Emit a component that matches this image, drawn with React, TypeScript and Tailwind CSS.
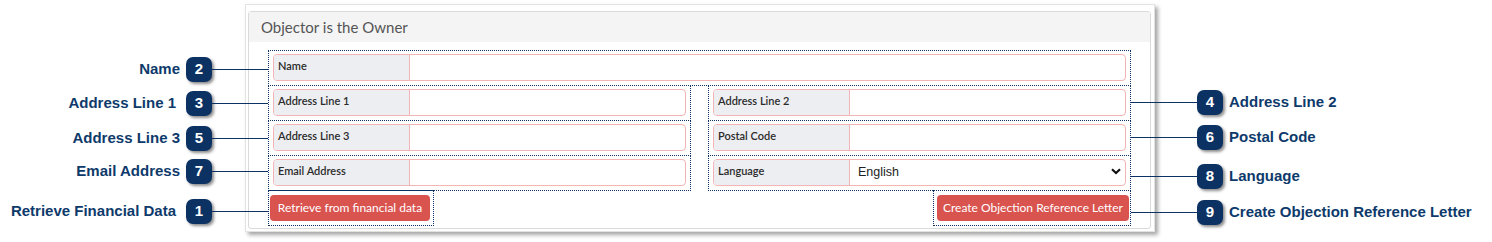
import React from 'react';

// Callout rows beside the form, each with its own offset from the row above
const leftCallouts = [
  { n: 2, label: 'Name', mt: 'mt-[56px]', pr: '' },
  { n: 3, label: 'Address Line 1', mt: 'mt-[8px]', pr: 'pr-[4px]' },
  { n: 5, label: 'Address Line 3', mt: 'mt-[9px]', pr: '' },
  { n: 7, label: 'Email Address', mt: 'mt-[7px]', pr: '' },
  { n: 1, label: 'Retrieve Financial Data', mt: 'mt-[14px]', pr: 'pr-[4px]' },
];

const rightCallouts = [
  { n: 4, label: 'Address Line 2', mt: 'mt-[89px]' },
  { n: 6, label: 'Postal Code', mt: 'mt-[9px]' },
  { n: 8, label: 'Language', mt: 'mt-[13px]' },
  { n: 9, label: 'Create Objection Reference Letter', mt: 'mt-[10px]' },
];

const Badge: React.FC<{ n: number }> = ({ n }) => (
  <div className="w-[26px] h-[25px] shrink-0 rounded-[7px] bg-[#0c3263] shadow-[2px_2px_3px_rgba(0,0,0,0.45)] flex items-center justify-center text-white text-[15px] font-bold">
    {n}
  </div>
);

const InputGroup: React.FC<{ label: string; children?: React.ReactNode }> = ({ label, children }) => (
  <div className="flex h-[27px] border border-[#f2b4b4] rounded-[4px] overflow-hidden bg-white">
    <div className="w-[136px] shrink-0 bg-[#edeef2] border-r border-[#f2b4b4] pl-[4px] pb-[2px] flex items-center text-[11px] font-semibold text-[#2b2b2b]">
      {label}
    </div>
    <div className="flex-1 flex items-center">{children}</div>
  </div>
);

const Cell: React.FC<{ label: string; first?: boolean; children?: React.ReactNode }> = ({ label, first, children }) => (
  <div className={`border border-dotted border-[#0c3263] pt-[3px] pb-[4px] px-[4px] ${first ? '' : '-mt-px'}`}>
    <InputGroup label={label}>{children}</InputGroup>
  </div>
);

export default function App() {
  return (
    <div className="w-[1492px] h-[242px] bg-white flex overflow-hidden" style={{ fontFamily: 'Lato, "Open Sans", sans-serif' }}>
      {/* left callouts */}
      <div className="w-[245px] shrink-0 flex flex-col" style={{ fontFamily: '"Liberation Sans", Arial, sans-serif' }}>
        {leftCallouts.map(c => (
          <div key={c.n} className={`flex items-center h-[26px] ${c.mt}`}>
            <div className={`flex-1 text-right text-[15px] font-bold text-[#0e3a6b] whitespace-nowrap ${c.pr}`}>{c.label}</div>
            <div className="ml-[6px]"><Badge n={c.n} /></div>
            <div className="w-[56px] h-px bg-[#0c3263] shrink-0 -mr-[23px] relative z-10" />
          </div>
        ))}
      </div>

      {/* form panel */}
      <div className="w-[910px] h-[228px] mt-[4px] shrink-0 bg-white border border-[#e2e2e2] shadow-[3px_3px_4px_rgba(0,0,0,0.35)] pt-[6px] pl-[2px] pr-[3px] pb-[2px]">
        <div className="h-full border border-[#dadada] rounded-[3px] flex flex-col">
          <div className="h-[30px] bg-[#f4f4f4] px-[12px] flex items-center text-[15px] text-[#555]">
            Objector is the Owner
          </div>
          <div className="pt-[8px] px-[19px]">
            <Cell label="Name" first />
            <div className="grid grid-cols-2 gap-x-[17px]">
              <div className="flex flex-col">
                <Cell label="Address Line 1" />
                <Cell label="Address Line 3" />
                <Cell label="Email Address" />
              </div>
              <div className="flex flex-col">
                <Cell label="Address Line 2" />
                <Cell label="Postal Code" />
                <Cell label="Language">
                  <select
                    defaultValue="English"
                    className="flex-1 h-full appearance-none bg-transparent outline-none pl-[8px] text-[12.5px] text-[#222]"
                    style={{ fontFamily: '"Liberation Sans", Arial, sans-serif' }}
                  >
                    <option>English</option>
                  </select>
                  <svg width="10" height="7" viewBox="0 0 10 7" className="mr-[4px] mb-[2px] shrink-0">
                    <path d="M1 1.2 L5 5 L9 1.2" fill="none" stroke="#111" strokeWidth="2.2" />
                  </svg>
                </Cell>
              </div>
            </div>
            <div className="flex justify-between">
              <div className="-mt-px border border-dotted border-[#0c3263] pt-[3px] pb-[4px] pl-[1px] pr-[3px]">
                <button className="w-[160px] h-[26px] rounded-[4px] bg-[#d9534f] text-white text-[12px]">
                  Retrieve from financial data
                </button>
              </div>
              <div className="-mt-px border border-dotted border-[#0c3263] pt-[3px] pb-[4px] pl-[3px] pr-[1px]">
                <button className="w-[192px] h-[26px] rounded-[4px] bg-[#d9534f] text-white text-[12px]">
                  Create Objection Reference Letter
                </button>
              </div>
            </div>
          </div>
        </div>
      </div>

      {/* right callouts */}
      <div className="flex-1 flex flex-col" style={{ fontFamily: '"Liberation Sans", Arial, sans-serif' }}>
        {rightCallouts.map(c => (
          <div key={c.n} className={`flex items-center h-[26px] ${c.mt}`}>
            <div className="w-[66px] h-px bg-[#0c3263] shrink-0 -ml-[24px] relative z-10" />
            <Badge n={c.n} />
            <div className="ml-[6px] text-[15px] font-bold text-[#0e3a6b] whitespace-nowrap">{c.label}</div>
          </div>
        ))}
      </div>
    </div>
  );
}
